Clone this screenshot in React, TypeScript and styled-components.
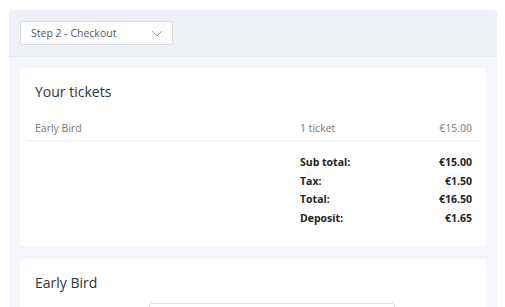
import styled, { createGlobalStyle } from "styled-components";

const Global = createGlobalStyle`
  body {
    margin: 0;
    background: #fff;
    font-family: "Open Sans", "Liberation Sans", sans-serif;
    color: #333;
  }
`;

const Page = styled.div`
  padding: 10px 8px 0 9px;
  height: 307px;
  box-sizing: border-box;
  overflow: hidden;
`;

const Panel = styled.div`
  background: #f5f6fb;
  border-radius: 4px 4px 0 0;
  min-height: 320px;
`;

const Header = styled.div`
  background: #edf1f5;
  border-bottom: 1px solid #e3e8ee;
  border-radius: 4px 4px 0 0;
  padding: 11px;
  height: 47px;
  box-sizing: border-box;
`;

const Select = styled.div`
  width: 153px;
  height: 24px;
  box-sizing: border-box;
  background: #fff;
  border: 1px solid #d9dde3;
  border-radius: 3px;
  display: flex;
  align-items: center;
  justify-content: space-between;
  padding: 0 9px 0 10px;
  font-size: 10.5px;
  color: #555;
`;

const Body = styled.div`
  padding: 11px 11px 0;
  display: flex;
  flex-direction: column;
  gap: 13px;
`;

const Card = styled.div<{ $h?: number }>`
  background: #fff;
  border-radius: 2px;
  padding: 14px 5px 0 7px;
  min-height: ${(p) => (p.$h ? p.$h + "px" : "auto")};
  box-sizing: border-box;
`;

const Title = styled.h2`
  margin: 0 0 0 8px;
  font-size: 14px;
  font-weight: 400;
  line-height: 20px;
  color: #333;
`;

const Row = styled.div<{ $bold?: boolean }>`
  display: grid;
  grid-template-columns: 265px 1fr auto;
  font-size: 10.5px;
  line-height: 15.5px;
  color: ${(p) => (p.$bold ? "#222" : "#777")};
  font-weight: ${(p) => (p.$bold ? 700 : 400)};
  padding: ${(p) => (p.$bold ? "1.5px 9px 1.5px 8px" : "0 9px 0 8px")};
`;

const ItemRow = styled(Row)`
  margin-top: 17px;
  padding-top: 2px;
  padding-bottom: 3px;
  border-bottom: 1px solid #eceef1;
`;

const Summary = styled.div`
  padding-top: 13px;
`;

const Amount = styled.span`
  text-align: right;
`;

const FormRow = styled.div`
  display: grid;
  grid-template-columns: 122px 246px;
  margin-top: 10px;
`;

const Input = styled.div`
  grid-column: 2;
  height: 24px;
  border: 1px solid #d9dde3;
  border-radius: 3px;
`;

const Chevron = () => (
  <svg width="12" height="7" viewBox="0 0 12 7">
    <path d="M1 1l5 5 5-5" fill="none" stroke="#a0a6ae" strokeWidth="1" />
  </svg>
);

const totals = [
  ["Sub total:", "€15.00"],
  ["Tax:", "€1.50"],
  ["Total:", "€16.50"],
  ["Deposit:", "€1.65"],
];

export default function App() {
  return (
    <Page>
      <Global />
      <Panel>
        <Header>
          <Select>
            <span>Step 2 - Checkout</span>
            <Chevron />
          </Select>
        </Header>
        <Body>
          <Card $h={178}>
            <Title>Your tickets</Title>
            <ItemRow>
              <span>Early Bird</span>
              <span>1 ticket</span>
              <Amount>€15.00</Amount>
            </ItemRow>
            <Summary>
              {totals.map(([k, v]) => (
                <Row $bold key={k}>
                  <span />
                  <span>{k}</span>
                  <Amount>{v}</Amount>
                </Row>
              ))}
            </Summary>
          </Card>
          <Card $h={80}>
            <Title>Early Bird</Title>
            <FormRow>
              <Input />
            </FormRow>
          </Card>
        </Body>
      </Panel>
    </Page>
  );
}
